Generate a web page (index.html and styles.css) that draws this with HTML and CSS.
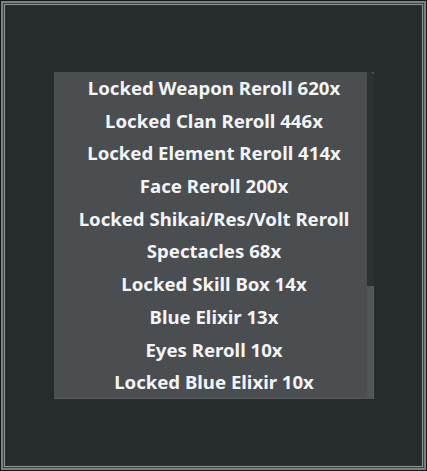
FILE: index.html
```html
<!DOCTYPE html>
<html>
<head>
<meta charset="utf-8">
<link rel="stylesheet" href="styles.css">
</head>
<body>
<div class="frame">
  <div class="frame-inner">
    <div class="panel">
      <ul class="list">
        <li>Locked Weapon Reroll 620x</li>
        <li>Locked Clan Reroll 446x</li>
        <li>Locked Element Reroll 414x</li>
        <li>Face Reroll 200x</li>
        <li>Locked Shikai/Res/Volt Reroll</li>
        <li>Spectacles 68x</li>
        <li>Locked Skill Box 14x</li>
        <li>Blue Elixir 13x</li>
        <li>Eyes Reroll 10x</li>
        <li>Locked Blue Elixir 10x</li>
      </ul>
      <div class="scrollbar"><div class="thumb"></div></div>
    </div>
  </div>
</div>
</body>
</html>
```
FILE: styles.css
```css
html, body {
  margin: 0;
  padding: 0;
  background: #1c2021;
}
.frame {
  width: 427px;
  height: 471px;
  box-sizing: border-box;
  border: 1px solid #15191a;
  padding: 0;
  background: #262c2d;
  box-shadow: inset 0 0 0 2px #7a8183, inset 0 0 0 3px #3c4344, inset 0 0 0 4px #8d9496, inset 0 0 0 5px #2b3132;
}
.frame-inner {
  padding: 71px 52px 71px 53px;
}
.panel {
  position: relative;
  width: 320px;
  height: 327px;
  background: #4a4e50;
  box-shadow: inset 0 -1px 0 #575b5d;
}
.list {
  list-style: none;
  margin: 0;
  padding: 0;
}
.list li {
  height: 32.7px;
  line-height: 32.7px;
  text-align: center;
  font-family: "Noto Sans", "Liberation Sans", sans-serif;
  font-weight: 700;
  font-size: 18.6px;
  color: #f4f4f4;
  white-space: nowrap;
}
.scrollbar {
  position: absolute;
  top: 0;
  right: 0;
  width: 7px;
  height: 327px;
  background: #505456;
  box-shadow: inset -1px 0 0 #5a5e60;
}
.thumb {
  height: 214px;
  background: #2b3032;
  border-top-right-radius: 4px;
  border-top-left-radius: 1px;
}
```
